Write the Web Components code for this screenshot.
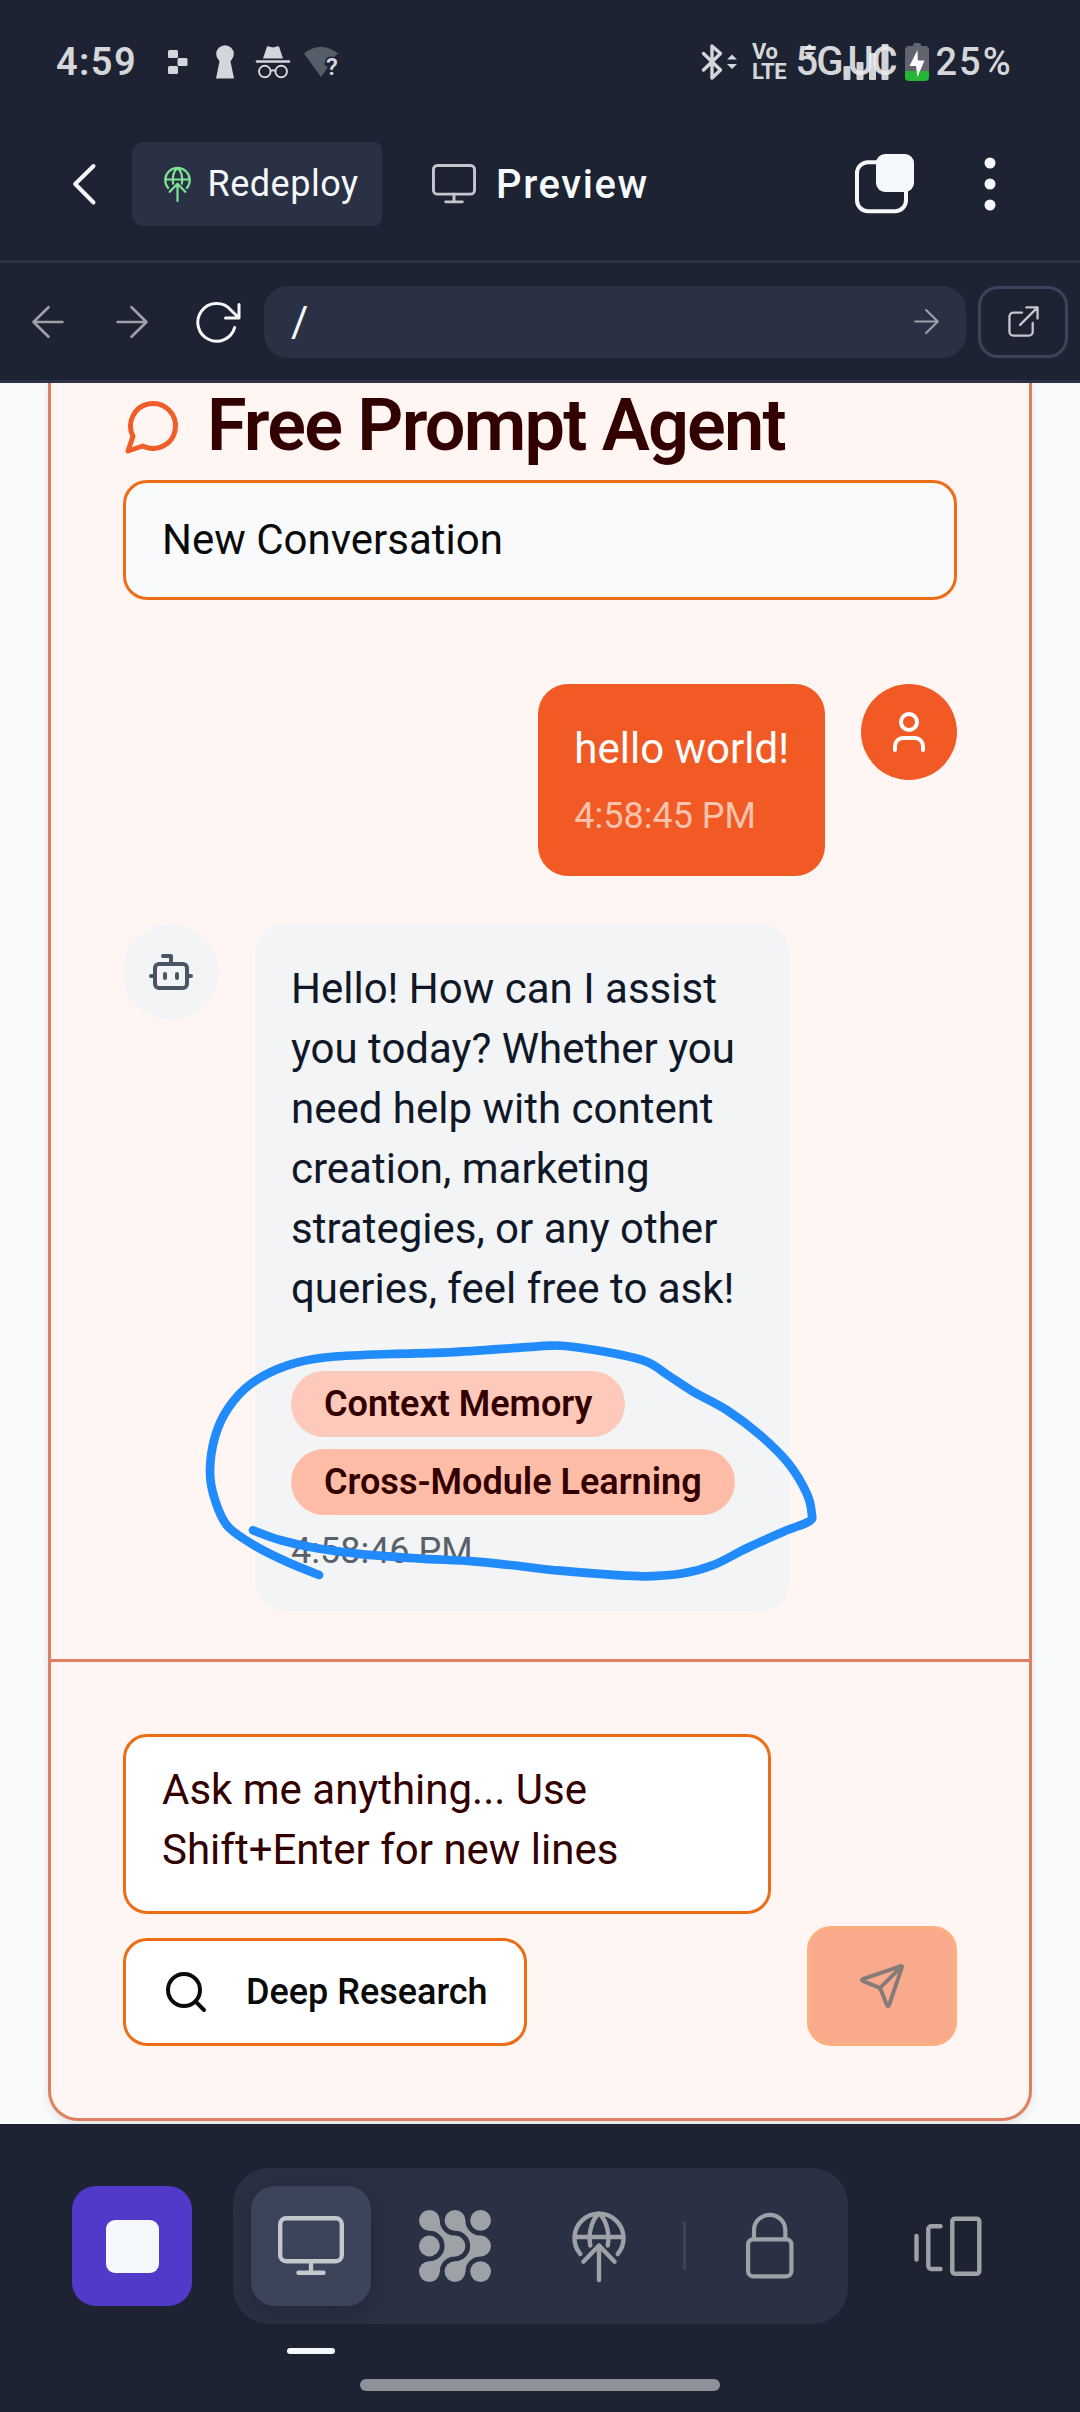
<!DOCTYPE html>
<html lang="en">
<head>
<meta charset="utf-8">
<title>Preview</title>
<style>
  html, body { margin: 0; padding: 0; background: #1d2332; }
  body { width: 1080px; height: 2412px; overflow: hidden; font-family: Roboto, "Liberation Sans", sans-serif; }
</style>
</head>
<body>
<preview-app></preview-app>

<script>
const ICONS = {
  globe: { box: '0 0 54 72', body: `<path d="M8.3 44A24.5 24.5 0 1 1 45.7 44M2.5 27H51.5M18.3 35.5C16.2 24 19 11 27 3.2C35 11 37.8 24 35.7 35.5M27 70V35.5M11.4 51.7 27 35.5 42.6 51.7"/>`, sw: 4.4 },
  monitor: { box: '0 0 66 60', body: `<rect x="2.2" y="2.2" width="61.6" height="43" rx="6"/><path d="M33 45.500V56.500M20.500 56.800H45.500"/>`, sw: 4.4 },
  back: { box: '0 0 24 42', body: `<path d="M20.500 3 2.200 21 20.500 39.500"/>`, sw: 4 },
  left: { box: '0 0 32 32', body: `<path d="M30.500 16H1.500M16.500 1.200 1.500 16 16.500 30.800"/>`, sw: 2.6 },
  right: { box: '0 0 32 32', body: `<path d="M1.500 16H30.500M15.500 1.200 30.500 16 15.500 30.800"/>`, sw: 2.6 },
  refresh: { box: '0 0 46 44', body: `<path d="M38.700 27.500A18.800 18.800 0 1 1 34.300 9.500L43 18M43 4.500V18H29.500"/>`, sw: 3 },
  external: { box: '0 0 32 32', body: `<path d="M14.500 6.800H5.500A4 4 0 0 0 1.500 10.800V26.500A4 4 0 0 0 5.500 30.500H21.500A4 4 0 0 0 25.500 26.500V17.500M19 1.500H30.500V13M30 2 12.500 19.500"/>`, sw: 2.4 },
  tabs: { box: '0 0 60 60', body: `<rect x="2" y="8.200" width="49" height="49" rx="11"/><rect x="21" y="0" width="38" height="38" rx="9" fill="currentColor" stroke="none"/>`, sw: 4 },
  more: { box: '0 0 12 54', body: `<g fill="currentColor" stroke="none"><circle cx="6" cy="6" r="5.500"/><circle cx="6" cy="27" r="5.500"/><circle cx="6" cy="48" r="5.500"/></g>`, sw: 0 },
  message: { box: '0 0 24 24', body: `<path d="M7.900 20A9 9 0 1 0 4 16.100L2 22Z"/>`, sw: 2 },
  user: { box: '0 0 24 24', body: `<path d="M19 21v-2a4 4 0 0 0-4-4H9a4 4 0 0 0-4 4v2"/><circle cx="12" cy="7" r="4"/>`, sw: 2 },
  bot: { box: '0 0 24 24', body: `<path d="M12 8V4H8"/><rect width="16" height="12" x="4" y="8" rx="2"/><path d="M2 14h2M20 14h2M15 13v2M9 13v2"/>`, sw: 2 },
  search: { box: '0 0 24 24', body: `<circle cx="11" cy="11" r="8"/><path d="m21 21-4.300-4.300"/>`, sw: 2 },
  send: { box: '0 0 24 24', body: `<path d="M14.536 21.686a.5.5 0 0 0 .937-.024l6.500-19a.496.496 0 0 0-.635-.635l-19 6.500a.5.5 0 0 0-.024.937l7.930 3.180a2 2 0 0 1 1.112 1.110z"/><path d="m21.854 2.147-10.940 10.939"/>`, sw: 2 },
  lock: { box: '0 0 48 66', body: `<rect x="2.100" y="26.300" width="43.300" height="37" rx="5"/><path d="M8 26V17A15.600 15 0 0 1 39.300 17V26"/>`, sw: 4.2 },
  layout: { box: '0 0 68 60', body: `<path d="M2.500 20V43.500M26.500 10.300H17.500A3 3 0 0 0 14.300 13.300V50A3 3 0 0 0 17.500 53H26.500"/><rect x="38.300" y="2.800" width="27" height="55" rx="2.500"/>`, sw: 4.400 },
  bluetooth: { box: '0 0 36 38', body: `<path d="M2.500 10.500 19.500 27 11 35V3L19.500 10.500 2.500 27"/><path d="M26 16.500 31 11.500 36 16.500ZM26 21 31 26 36 21Z" fill="currentColor" stroke="none"/>`, sw: 3.400 },
  blocks: { box: '0 0 20 24', body: `<g fill="currentColor" stroke="none"><rect x="0" y="0" width="10" height="8" rx="1.500"/><rect x="9.500" y="8" width="10" height="8" rx="1.500"/><rect x="0" y="16" width="10" height="8" rx="1.500"/></g>`, sw: 0 },
  keyhole: { box: '0 0 18 34', body: `<g fill="currentColor" stroke="none"><circle cx="9" cy="9" r="8.800"/><path d="M4 14H14L18 33.500H0Z"/></g>`, sw: 0 },
  incognito: { box: '0 0 34 34', body: `<path d="M7 13.500 11 1.500Q12 .8 13 1.500L17 2.500 21 1.500Q22 .8 23 1.500L27 13.500Z" fill="currentColor" stroke="none"/><path d="M1 16.500H33" stroke-width="2.600"/><circle cx="8.800" cy="26.500" r="5.800"/><circle cx="25.200" cy="26.500" r="5.800"/><path d="M14.600 26Q17 24.500 19.400 26"/>`, sw: 1.900 },
  wifi: { box: '0 0 34 32', body: `<path d="M0 7.500Q17-6 34 7.500L30 11Q21 8.500 20.500 19L24 21 17 31Z" fill="#565c68" stroke="none"/>`, sw: 0 },
  battery: { box: '0 0 24 38', body: `<path d="M8 3V2Q8 0 10 0H14Q16 0 16 2V3H20Q24 3 24 7V28H0V7Q0 3 4 3Z" fill="#62656f" stroke="none"/><path d="M0 28H24V34Q24 38 20 38H4Q0 38 0 34Z" fill="#25b636" stroke="none"/><path d="M12.500 7 4.500 23H11L12.500 34 19.500 17.500H12.800Z" fill="#fff" stroke="none"/>`, sw: 0 },
};

/* 3x3 dot lattice whose diagonals melt together */
(() => {
  const p = 25.6, r = 10.4, g = p - r, c = [r, r + p, r + 2 * p];
  let dots = '', joins = '';
  for (const y of c) for (const x of c) dots += `<circle cx="${x}" cy="${y}" r="${r}"/>`;
  const join = (x, y, s) => joins +=
    `<path d="M${x} ${y}h${r}A${g} ${g} 0 0 ${s > 0 ? 0 : 1} ${x + p} ${y + s * g}V${y + s * p}H${x + g}A${g} ${g} 0 0 ${s > 0 ? 0 : 1} ${x} ${y + s * r}Z"/>`;
  join(c[0], c[0], 1); join(c[1], c[0], 1); join(c[0], c[2], -1); join(c[1], c[2], -1);
  ICONS.lattice = { box: '0 0 72 72', body: `<g fill="currentColor" stroke="none">${dots}${joins}</g>`, sw: 0 };
})();

function define(tag, css, html) {
  customElements.define(tag, class extends HTMLElement {
    constructor() {
      super();
      const t = document.createElement('template');
      t.innerHTML = `<style>*{box-sizing:border-box}:host{box-sizing:border-box}${css}</style>${html}`;
      this.attachShadow({ mode: 'open' }).appendChild(t.content.cloneNode(true));
    }
  });
}

customElements.define('ui-icon', class extends HTMLElement {
  connectedCallback() {
    if (this.shadowRoot) return;
    const i = ICONS[this.getAttribute('name')];
    const w = this.getAttribute('w'), h = this.getAttribute('h') || w;
    this.attachShadow({ mode: 'open' }).innerHTML =
      `<style>:host{display:block;flex:none;width:${w}px;height:${h}px}svg{display:block;overflow:visible}</style>
       <svg width="${w}" height="${h}" viewBox="${i.box}" fill="none" stroke="currentColor" stroke-width="${i.sw}" stroke-linecap="round" stroke-linejoin="round">${i.body}</svg>`;
  }
});

define('status-bar', `
  :host{display:flex;height:124px;padding:0 67px 0 56px;align-items:center;color:#d5d6da;justify-content:space-between}
  .side{display:flex;align-items:center}
  .time{font-size:38px;font-weight:600;letter-spacing:1.400px;width:112px;line-height:44px}
  .q{position:absolute;left:22px;top:9px;font-size:24px;line-height:24px;font-weight:600}
  .wifi{position:relative;margin-left:14px}
  .volte{font-size:22px;font-weight:700;line-height:20px;margin-left:15px;width:43.500px;letter-spacing:-.4px}
  .volte div{height:20px}
  .net{position:relative;font-size:40px;line-height:44px;font-weight:500;width:109.500px;white-space:nowrap;letter-spacing:-2px;word-spacing:-2px}
  .net svg{position:absolute;left:0;top:0}
  .pct{font-size:38px;font-weight:500;line-height:44px;margin-left:6.500px;width:77.500px;white-space:nowrap;letter-spacing:2px}
`, `
  <div class="side">
    <div class="time">4:59</div>
    <ui-icon name="blocks" w="20" h="24"></ui-icon>
    <ui-icon name="keyhole" w="18" h="34" style="margin-left:28px"></ui-icon>
    <ui-icon name="incognito" w="34" h="34" style="margin-left:22px"></ui-icon>
    <div class="wifi"><ui-icon name="wifi" w="34" h="32"></ui-icon><span class="q">?</span></div>
  </div>
  <div class="side">
    <ui-icon name="bluetooth" w="36" h="38"></ui-icon>
    <div class="volte"><div>Vo</div><div>LTE</div></div>
    <div class="net">5G UC
      <svg width="100" height="44" viewBox="0 0 100 44"><g fill="#ececee" fill-opacity=".88"><rect x="47.500" y="26" width="7" height="14" rx="1"/><rect x="60.500" y="22" width="7" height="18" rx="1"/><rect x="73" y="13" width="7" height="27" rx="1"/><rect x="85.500" y="4" width="7" height="36" rx="1"/><path d="M8 9 13.500 4 19 9ZM8 12 13.500 18 19 12Z"/></g></svg>
    </div>
    <ui-icon name="battery" w="24" h="38"></ui-icon>
    <div class="pct">25%</div>
  </div>`);

define('app-header', `
  :host{display:flex;align-items:center;height:139px;padding:0 84px 16px 73px;border-bottom:3px solid #2c3145;color:#f5f9fc}
  .btn{display:flex;align-items:center;width:250px;height:84px;margin-left:35px;padding-left:32px;background:#2b3145;border-radius:12px 8px 8px 12px;font-size:36px;gap:16.500px;letter-spacing:.5px}
  .btn ui-icon{color:#7ee392}
  .title{display:flex;align-items:center;margin-left:50px;gap:20px;font-size:40px;font-weight:500;letter-spacing:1.600px;flex:1}
  .title ui-icon{color:#c2c8cc}
`, `
  <ui-icon name="back" w="24" h="42"></ui-icon>
  <div class="btn"><ui-icon name="globe" w="27" h="36"></ui-icon><span>Redeploy</span></div>
  <div class="title"><ui-icon name="monitor" w="44" h="40"></ui-icon><span>Preview</span></div>
  <ui-icon name="tabs" w="60"></ui-icon>
  <ui-icon name="more" w="12" h="54" style="margin-left:69px"></ui-icon>`);

define('address-bar', `
  :host{display:flex;align-items:center;height:120px;padding:0 12px 0 32px;border-bottom:3px solid #2c3145;color:#9ea2a6}
  .field{display:flex;align-items:center;justify-content:space-between;flex:1;height:72px;margin:0 12px 0 22px;padding:0 27px;background:#2b3145;border-radius:24px}
  .field span{color:#f5f9fc;font-size:42px;line-height:50px}
  .open{display:flex;align-items:center;justify-content:center;width:90px;height:72px;border:3px solid #3c445c;border-radius:20px;color:#c2c8cc}
`, `
  <ui-icon name="left" w="32"></ui-icon>
  <ui-icon name="right" w="32" style="margin-left:52px"></ui-icon>
  <ui-icon name="refresh" w="46" h="44" style="margin-left:48px;color:#f5f9fc"></ui-icon>
  <div class="field"><span>/</span><ui-icon name="right" w="25"></ui-icon></div>
  <div class="open"><ui-icon name="external" w="31"></ui-icon></div>`);

define('chat-message', `
  :host{display:flex;gap:36px;align-items:flex-start}
  :host([from=user]){flex-direction:row-reverse;--bg:#f15a24;--fg:#fff;--icon:#fff;--time:#fbc2ac}
  :host([from=bot]){--bg:#f3f4f6;--fg:#101828;--icon:#4a5565;--time:#586069}
  .avatar{display:flex;align-items:center;justify-content:center;flex:none;width:96px;height:96px;border-radius:50%;background:var(--bg);color:var(--icon)}
  .bubble{padding:35px 36px 36px;border-radius:30px;background:var(--bg);color:var(--fg);font-size:42px;line-height:60px}
  :host([from=bot]) .bubble{width:535px}
  .time{font-size:36px;line-height:48px;margin-top:13px;color:var(--time)}
  :host([from=bot]) .time{margin-top:12px}
`, `
  <div class="avatar"><slot name="avatar"></slot></div>
  <div class="bubble"><slot></slot><slot name="tags"></slot><div class="time"><slot name="time"></slot></div></div>`);

define('tag-list', `
  :host{display:flex;flex-direction:column;align-items:flex-start;gap:12px;margin-top:25px;padding-top:24px;border-top:3px solid #f5f6f8}
`, `<slot></slot>`);

define('ui-tag', `
  :host{display:block;height:66px;padding:9px 33px;border-radius:33px;background:var(--tag,#fdc9ba);color:#330000;font-size:36px;line-height:48px;font-weight:600;white-space:nowrap}
`, `<slot></slot>`);

define('chat-card', `
  :host{display:block;margin:0 48px;height:1738px;background:#fff6f4;border:3px solid #df8062;border-top:0;border-radius:0 0 30px 30px;box-shadow:0 3px 9px rgba(0,0,0,.1)}
  .head{padding:7px 72px 0}
  h1{display:flex;align-items:center;gap:24px;margin:0 0 18px;font-size:72px;line-height:72px;font-weight:600;letter-spacing:-1.8px;color:#330000}
  h1 ui-icon{color:#ef5d28}
  .select{display:flex;align-items:center;height:120px;padding:0 36px 2px;border:3px solid #ed6d16;border-radius:24px;background:#f9fafc;font-size:42px;color:#0a0a0a}
  .log{display:flex;flex-direction:column;gap:48px;padding:84px 72px 48px}
  .foot{display:flex;justify-content:space-between;align-items:flex-end;padding:72px;border-top:3px solid #df8062}
  .compose{display:flex;flex-direction:column;align-items:flex-start;gap:24px}
  .area{width:648px;height:180px;padding:23px 36px;border:3px solid #ed6d16;border-radius:24px;background:#fff;font-size:42px;line-height:60px;color:#330000}
  .deep{display:flex;align-items:center;gap:36px;width:404px;height:108px;padding:0 36px;border:3px solid #ed6d16;border-radius:24px;background:#fff;font-size:36px;font-weight:500;color:#0a0a0a;white-space:nowrap}
  .send{display:flex;align-items:center;justify-content:center;width:150px;height:120px;border:3px solid #fdb07e;border-radius:24px;background:#f9aa8d;color:#867b78}
`, `
  <div class="head">
    <h1><ui-icon name="message" w="60"></ui-icon><span>Free Prompt Agent</span></h1>
    <div class="select">New Conversation</div>
  </div>
  <div class="log">
    <chat-message from="user"><ui-icon slot="avatar" name="user" w="48"></ui-icon>hello world!<span slot="time">4:58:45 PM</span></chat-message>
    <chat-message from="bot"><ui-icon slot="avatar" name="bot" w="48"></ui-icon>Hello! How can I assist you today? Whether you need help with content creation, marketing strategies, or any other queries, feel free to ask!<tag-list slot="tags"><ui-tag>Context Memory</ui-tag><ui-tag style="--tag:#ffbda7">Cross-Module Learning</ui-tag></tag-list><span slot="time">4:58:46 PM</span></chat-message>
  </div>
  <div class="foot">
    <div class="compose">
      <div class="area">Ask me anything... Use<br>Shift+Enter for new lines</div>
      <div class="deep"><ui-icon name="search" w="48"></ui-icon><span>Deep Research</span></div>
    </div>
    <div class="send"><ui-icon name="send" w="48"></ui-icon></div>
  </div>`);

define('bottom-dock', `
  :host{display:block;padding-top:44px;height:288px;color:#9ea2a6}
  .row{display:flex;align-items:center;justify-content:space-between;padding:0 72px}
  .stop,.tab{display:flex;align-items:center;justify-content:center;width:120px;height:120px;border-radius:24px}
  .stop{background:#5139c9}
  .stop i{width:53px;height:53px;border-radius:9px;background:#f5f9fc}
  .panel{display:flex;align-items:center;gap:24px;height:156px;padding:0 18px;border-radius:36px;background:#2b3145}
  .active{position:relative;background:#3c445c;color:#c2c8cc;box-shadow:0 6px 24px rgba(20,24,36,.4)}
  .active::after{content:"";position:absolute;left:36px;top:162px;width:48px;height:6px;border-radius:3px;background:#f5f9fc}
  .rule{width:3px;height:48px;background:#3c445c}
  .home{width:360px;height:12px;margin:55px auto 0;border-radius:6px;background:#8e9199}
`, `
  <div class="row">
    <div class="stop"><i></i></div>
    <div class="panel">
      <div class="tab active"><ui-icon name="monitor" w="66" h="60"></ui-icon></div>
      <div class="tab"><ui-icon name="lattice" w="72"></ui-icon></div>
      <div class="tab"><ui-icon name="globe" w="54" h="72"></ui-icon></div>
      <div class="rule"></div>
      <div class="tab"><ui-icon name="lock" w="48" h="66"></ui-icon></div>
    </div>
    <div class="tab"><ui-icon name="layout" w="68" h="60"></ui-icon></div>
  </div>
  <div class="home"></div>`);

/* Freehand loop drawn over the tags, smoothed through its sample points */
customElements.define('ink-loop', class extends HTMLElement {
  connectedCallback() {
    const p = [[319,1575],[286.700,1561.700],[256.700,1546.700],[228,1526.700],[215,1500],[210,1471.700],[215,1436.700],[228.300,1408],[251.700,1383.300],[286.700,1365.700],[326.700,1357.300],[390,1354],[450,1352.300],[520,1347.700],[550,1345.700],[568,1346.300],[613.300,1353.300],[646.700,1361.700],[666.700,1374.300],[693.300,1391.700],[726.700,1410],[760,1435],[788.300,1463.300],[806.700,1493.300],[811.700,1513.300],[809,1521.500],[783.300,1531.700],[746.700,1548.300],[713.300,1565],[683.300,1573.300],[646.700,1576.300],[610,1574.700],[560,1570.700],[510,1565],[473.300,1561.300],[416.700,1558.300],[363.300,1554.300],[316.700,1548.300],[280,1540],[253,1530.300]];
    let d = `M${p[0]}`;
    for (let i = 0; i < p.length - 1; i++) {
      const a = p[i - 1] || p[i], b = p[i], c = p[i + 1], e = p[i + 2] || c;
      d += `C${b[0] + (c[0] - a[0]) / 6} ${b[1] + (c[1] - a[1]) / 6} ${c[0] - (e[0] - b[0]) / 6} ${c[1] - (e[1] - b[1]) / 6} ${c[0]} ${c[1]}`;
    }
    this.attachShadow({ mode: 'open' }).innerHTML =
      `<style>:host{position:absolute;inset:0;pointer-events:none}svg{display:block}</style>
       <svg width="1080" height="2412" viewBox="0 0 1080 2412"><path d="${d}" fill="none" stroke="#228bfc" stroke-width="8.700" stroke-linecap="round" stroke-linejoin="round"/></svg>`;
  }
});

define('preview-app', `
  :host{display:flex;flex-direction:column;position:relative;width:1080px;height:2412px;background:#1d2332;overflow:hidden}
  main{height:1741px;background:#f9fafc;overflow:hidden}
`, `
  <status-bar></status-bar>
  <app-header></app-header>
  <address-bar></address-bar>
  <main><chat-card></chat-card></main>
  <bottom-dock></bottom-dock>
  <ink-loop></ink-loop>`);
</script>
</body>
</html>
